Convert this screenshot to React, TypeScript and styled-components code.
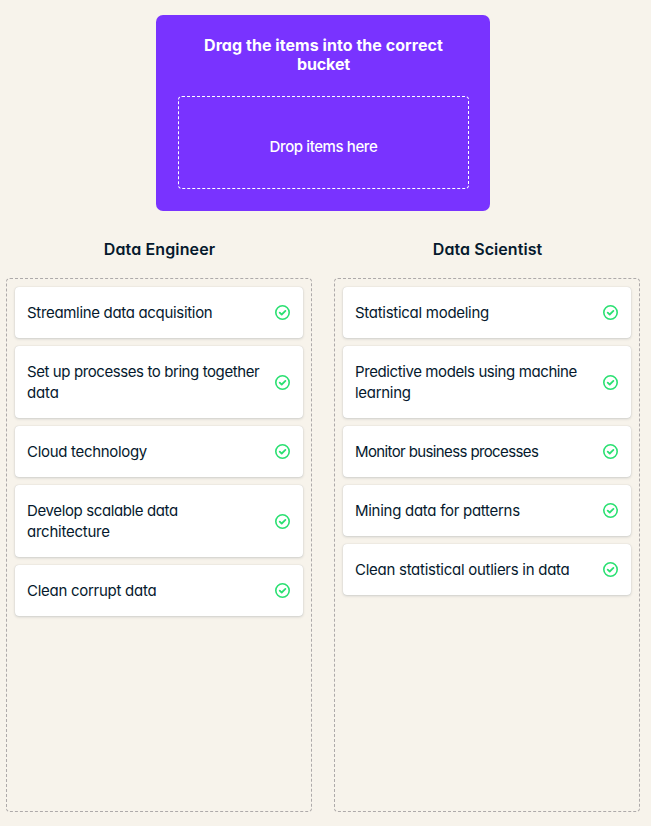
import React from 'react';
import styled, { createGlobalStyle } from 'styled-components';

const GlobalStyle = createGlobalStyle`
  *, *::before, *::after { box-sizing: border-box; }
  body {
    margin: 0;
    background: #f7f3eb;
    color: #05192d;
    font-family: Inter, "Noto Sans", sans-serif;
    font-feature-settings: 'cv11';
  }
`;

const Page = styled.main`
  min-height: 826px;
  padding: 15px 11px 14px 6px;
  display: flex;
  flex-direction: column;
`;

const Hero = styled.section`
  width: 334px;
  height: 196px;
  margin-left: 150px;
  padding: 21px 21px 22px 22px;
  border-radius: 7px;
  background: #7933ff;
  color: #fff;
  display: flex;
  flex-direction: column;
  justify-content: space-between;
`;

const HeroTitle = styled.h1`
  margin: 0;
  font-size: 16px;
  line-height: 19px;
  font-weight: 700;
  text-align: center;
`;

const DropZone = styled.div`
  height: 93px;
  padding-top: 8px;
  border: 1px dashed #fff;
  border-radius: 4px;
  display: flex;
  align-items: center;
  justify-content: center;
  font-size: 15px;
  font-weight: 500;
`;

const Buckets = styled.div`
  display: grid;
  grid-template-columns: 306px 306px;
  column-gap: 22px;
  margin-top: 26px;
`;

const BucketTitle = styled.h2`
  margin: 0 0 17px;
  padding-left: 1px;
  font-size: 16px;
  line-height: 24px;
  font-weight: 600;
  text-align: center;
`;

const BucketList = styled.ul`
  height: 534px;
  margin: 0;
  padding: 8px;
  list-style: none;
  border: 1px dashed #aeaaaa;
  border-radius: 4px;
  display: flex;
  flex-direction: column;
  gap: 8px;
`;

const Card = styled.li`
  padding: 15px 13px 15px 12px;
  border-radius: 4px;
  background: #fff;
  box-shadow: 0 0 1px rgba(5, 25, 45, 0.18), 0 1px 3px rgba(5, 25, 45, 0.16);
  display: flex;
  align-items: center;
  justify-content: space-between;
  font-size: 15px;
  line-height: 21px;
`;

const Line = styled.span<{ $tracking: number }>`
  display: block;
  white-space: nowrap;
  letter-spacing: ${p => p.$tracking}px;
`;

const CheckIcon = styled.svg`
  flex: none;
  display: block;
  width: 15px;
  height: 15px;
  fill: none;
  stroke: #2be072;
`;

type TextLine = [text: string, tracking: number];

const buckets: { title: TextLine; items: TextLine[][] }[] = [
  {
    title: ['Data Engineer', 0.13],
    items: [
      [['Streamline data acquisition', -0.32]],
      [['Set up processes to bring together', -0.41], ['data', -0.15]],
      [['Cloud technology', -0.31]],
      [['Develop scalable data', -0.38], ['architecture', -0.24]],
      [['Clean corrupt data', -0.27]],
    ],
  },
  {
    title: ['Data Scientist', 0.07],
    items: [
      [['Statistical modeling', -0.28]],
      [['Predictive models using machine', -0.4], ['learning', -0.3]],
      [['Monitor business processes', -0.62]],
      [['Mining data for patterns', -0.28]],
      [['Clean statistical outliers in data', -0.27]],
    ],
  },
];

function Check() {
  return (
    <CheckIcon viewBox="0 0 15 15" aria-hidden="true">
      <circle cx="7.5" cy="7.5" r="6.7" strokeWidth="1.6" />
      <path d="M4.7 7.6 6.7 9.5 10.4 5.9" strokeWidth="1.8" strokeLinecap="round" strokeLinejoin="round" />
    </CheckIcon>
  );
}

export default function App() {
  return (
    <>
      <GlobalStyle />
      <Page>
        <Hero>
          <HeroTitle>
            <Line $tracking={0.05}>Drag the items into the correct</Line>
            <Line $tracking={-0.1}>bucket</Line>
          </HeroTitle>
          <DropZone>
            <Line $tracking={-0.4}>Drop items here</Line>
          </DropZone>
        </Hero>
        <Buckets>
          {buckets.map(({ title, items }) => (
            <section key={title[0]}>
              <BucketTitle>
                <Line $tracking={title[1]}>{title[0]}</Line>
              </BucketTitle>
              <BucketList>
                {items.map(lines => (
                  <Card key={lines[0][0]}>
                    <div>
                      {lines.map(([text, tracking]) => (
                        <Line key={text} $tracking={tracking}>{text}</Line>
                      ))}
                    </div>
                    <Check />
                  </Card>
                ))}
              </BucketList>
            </section>
          ))}
        </Buckets>
      </Page>
    </>
  );
}
